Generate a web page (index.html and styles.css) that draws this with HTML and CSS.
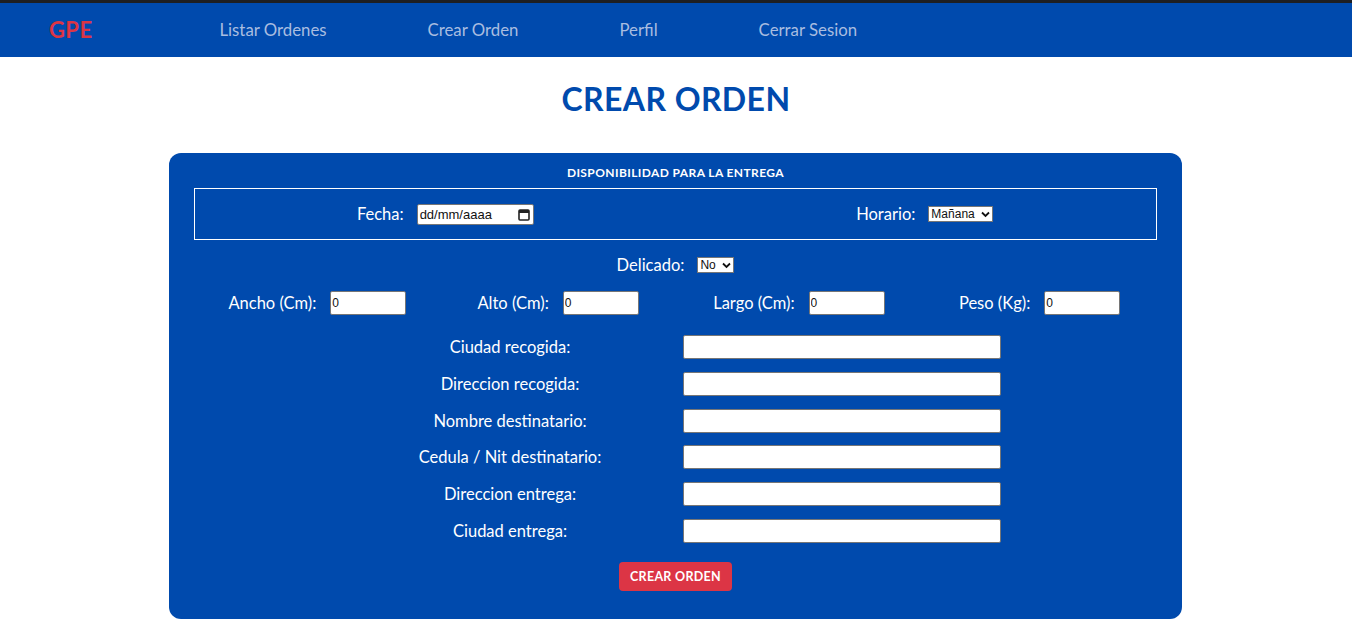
FILE: index.html
```html
<!DOCTYPE html>
<html lang="es">
<head>
<meta charset="utf-8">
<title>Crear Orden</title>
<link rel="stylesheet" href="styles.css">
</head>
<body>
<nav class="navbar">
  <a class="brand" href="#">GPE</a>
  <ul class="nav-links">
    <li><a href="#">Listar Ordenes</a></li>
    <li><a href="#">Crear Orden</a></li>
    <li><a href="#">Perfil</a></li>
    <li><a href="#">Cerrar Sesion</a></li>
  </ul>
</nav>
<main class="page">
  <h1 class="page-title">CREAR ORDEN</h1>
  <form class="card">
    <h2 class="card-title">DISPONIBILIDAD PARA LA ENTREGA</h2>
    <div class="avail-box">
      <div class="avail-cell">
        <label class="lbl">Fecha:</label>
        <div class="date-input"><span>dd/mm/aaaa</span>
          <svg class="cal" width="12" height="13" viewBox="0 0 12 13"><rect x="1" y="2" width="10" height="10" rx="1" fill="none" stroke="#222" stroke-width="1.6"/><rect x="1" y="2" width="10" height="3" fill="#222"/></svg>
        </div>
      </div>
      <div class="avail-cell">
        <label class="lbl">Horario:</label>
        <div class="sel sel-horario"><span>Mañana</span><svg class="chev" width="9" height="7" viewBox="0 0 9 7"><path d="M1 1.5 L4.5 5 L8 1.5" fill="none" stroke="#111" stroke-width="1.8"/></svg></div>
      </div>
    </div>
    <div class="delicado-row">
      <label class="lbl">Delicado:</label>
      <div class="sel sel-no"><span>No</span><svg class="chev" width="9" height="7" viewBox="0 0 9 7"><path d="M1 1.5 L4.5 5 L8 1.5" fill="none" stroke="#111" stroke-width="1.8"/></svg></div>
    </div>
    <div class="dims-row">
      <div class="dim"><label class="lbl">Ancho (Cm):</label><input class="num" type="text" value="0"></div>
      <div class="dim"><label class="lbl">Alto (Cm):</label><input class="num" type="text" value="0"></div>
      <div class="dim"><label class="lbl">Largo (Cm):</label><input class="num" type="text" value="0"></div>
      <div class="dim"><label class="lbl">Peso (Kg):</label><input class="num" type="text" value="0"></div>
    </div>
    <div class="fields">
      <label class="lbl">Ciudad recogida:</label><div class="fcell"><input class="txt" type="text"></div>
      <label class="lbl">Direccion recogida:</label><div class="fcell"><input class="txt" type="text"></div>
      <label class="lbl">Nombre destinatario:</label><div class="fcell"><input class="txt" type="text"></div>
      <label class="lbl">Cedula / Nit destinatario:</label><div class="fcell"><input class="txt" type="text"></div>
      <label class="lbl">Direccion entrega:</label><div class="fcell"><input class="txt" type="text"></div>
      <label class="lbl">Ciudad entrega:</label><div class="fcell"><input class="txt" type="text"></div>
    </div>
    <div class="actions"><button type="button" class="btn">CREAR ORDEN</button></div>
  </form>
</main>
</body>
</html>
```
FILE: styles.css
```css
* { box-sizing: border-box; }
html, body { margin: 0; padding: 0; background: #fff; }
body { font-family: "Lato", "Open Sans", sans-serif; color: #fff; }

.navbar {
  height: 57px;
  border-top: 3px solid #1e1f22;
  background: #004aad;
  display: flex;
  align-items: center;
  padding-left: 49px;
  padding-bottom: 2px;
}
.brand {
  color: #dc3545;
  font-weight: 700;
  font-size: 22px;
  text-decoration: none;
  letter-spacing: 0.4px;
}
.nav-links {
  list-style: none;
  margin: 0 0 0 127px;
  padding: 0;
  display: flex;
  gap: 101px;
}
.nav-links a {
  color: #a9bde0;
  text-decoration: none;
  font-size: 16.8px;
}

.page { padding-top: 22px; padding-bottom: 20px; }
.page-title {
  margin: 0;
  text-align: center;
  color: #004aad;
  font-size: 32px;
  font-weight: 700;
  line-height: 40px;
  letter-spacing: 0.4px;
}

.card {
  width: 1013px;
  margin: 34px 0 0 calc(50% - 507px);
  background: #004aad;
  border-radius: 12px;
  padding: 12px 25px 28px;
}
.card-title {
  margin: 0;
  text-align: center;
  font-size: 12px;
  font-weight: 700;
  line-height: 16px;
  letter-spacing: 0.4px;
}
.avail-box {
  margin-top: 7px;
  height: 52px;
  border: 1px solid #fff;
  display: grid;
  grid-template-columns: 1fr 1fr;
  align-items: center;
}
.avail-cell {
  display: flex;
  justify-content: center;
  align-items: center;
  gap: 13px;
}
.avail-cell:first-child { padding-left: 20px; }
.avail-cell:last-child { padding-left: 18px; }
.lbl { font-size: 16.5px; line-height: 20px; color: #fff; }

.date-input {
  width: 117px;
  height: 21px;
  background: #fff;
  border: 1px solid #767676;
  border-radius: 2px;
  color: #111;
  font-family: "Liberation Sans", Arial, sans-serif;
  font-size: 13px;
  display: flex;
  align-items: center;
  justify-content: space-between;
  padding: 0 3px 0 2px;
}
.sel {
  position: relative;
  background: #fff;
  border: 1px solid #767676;
  color: #111;
  font-family: "Liberation Sans", Arial, sans-serif;
  font-size: 12px;
  height: 16px;
  display: flex;
  align-items: center;
  padding: 0 2px 0 2px;
  gap: 1px;
  line-height: 14px;
}
.sel-horario { width: 65px; }
.sel-no { width: 37px; }
.chev { flex: none; margin-left: auto; }

.delicado-row {
  margin-top: 15px;
  display: flex;
  justify-content: center;
  align-items: center;
  gap: 13px;
}
.dims-row {
  margin-top: 16px;
  display: grid;
  grid-template-columns: repeat(4, 1fr);
}
.dim {
  display: flex;
  justify-content: center;
  align-items: center;
  gap: 14px;
  padding-left: 6px;
}
.num {
  width: 76px;
  height: 24px;
  border: 1px solid #767676;
  border-radius: 2px;
  font-family: "Liberation Sans", Arial, sans-serif;
  font-size: 12px;
  padding: 0 1px;
  color: #111;
}

.fields {
  margin: 20px auto 0;
  width: 662px;
  display: grid;
  grid-template-columns: 331px 331px;
  row-gap: 12.8px;
  align-items: center;
}
.fields .lbl { text-align: center; }
.fcell { padding-left: 7px; }
.txt {
  display: block;
  width: 318px;
  height: 24px;
  border: 1px solid #767676;
  border-radius: 2px;
  padding: 0 2px;
}
.actions { display: flex; justify-content: center; margin-top: 19px; }
.btn {
  background: #dc3545;
  color: #fff;
  border: none;
  border-radius: 4px;
  width: 113px;
  height: 29px;
  font-family: "Lato", sans-serif;
  font-weight: 700;
  font-size: 12.5px;
  letter-spacing: 0.3px;
}
```
